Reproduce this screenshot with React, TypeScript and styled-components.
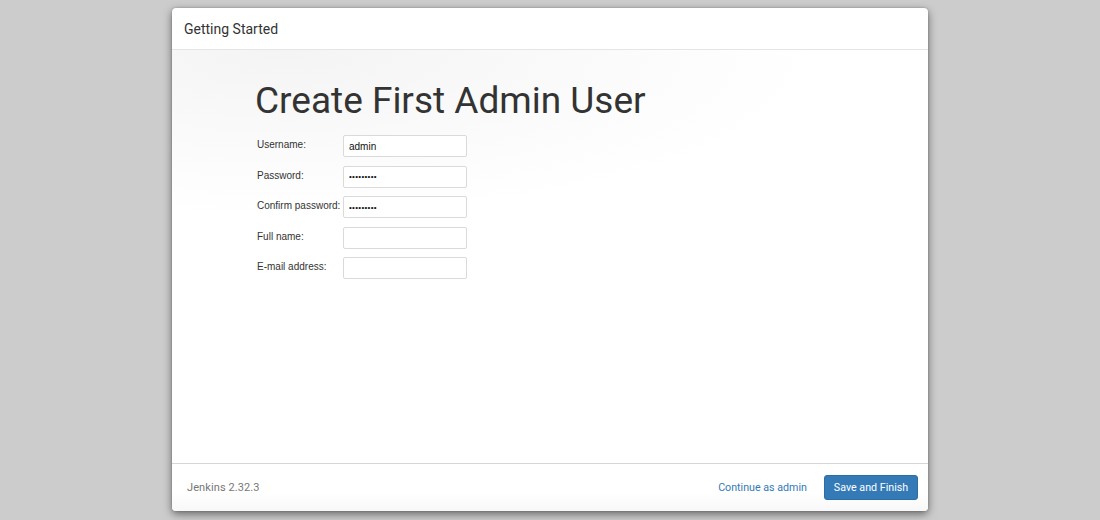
import styled, { createGlobalStyle } from "styled-components";

const GlobalStyle = createGlobalStyle`
  html, body {
    margin: 0;
    padding: 0;
    background: #cccccc;
  }
  body {
    font-family: Roboto, "Liberation Sans", Arial, sans-serif;
    color: #333;
  }
`;

const fields = [
  { label: "Username:", type: "text", value: "admin" },
  { label: "Password:", type: "password", value: "admin1234" },
  { label: "Confirm password:", type: "password", value: "admin1234" },
  { label: "Full name:", type: "text", value: "" },
  { label: "E-mail address:", type: "text", value: "" },
];

const App = () => {
  return (
    <>
      <GlobalStyle />
      <Backdrop>
        <Dialog>
          <DialogHeader>
            <DialogTitle>Getting Started</DialogTitle>
          </DialogHeader>
          <DialogBody>
            <PageTitle>Create First Admin User</PageTitle>
            <FormGrid>
              {fields.map((f) => (
                <FieldRow key={f.label}>
                  <FieldLabel>{f.label}</FieldLabel>
                  <TextInput
                    type={f.type}
                    defaultValue={f.value}
                    $masked={f.type === "password"}
                  />
                </FieldRow>
              ))}
            </FormGrid>
          </DialogBody>
          <DialogFooter>
            <Version>Jenkins 2.32.3</Version>
            <FooterActions>
              <LinkButton href="#">Continue as admin</LinkButton>
              <PrimaryButton>Save and Finish</PrimaryButton>
            </FooterActions>
          </DialogFooter>
        </Dialog>
      </Backdrop>
    </>
  );
};

export default App;

const Backdrop = styled.div`
  width: 1100px;
  height: 520px;
  display: flex;
  justify-content: center;
  padding-top: 8px;
  box-sizing: border-box;
  overflow: hidden;
`;

const Dialog = styled.div`
  width: 756px;
  height: 503px;
  background: #fff;
  border-radius: 4px;
  box-shadow: 0 3px 9px rgba(0, 0, 0, 0.5), 0 0 2px rgba(0, 0, 0, 0.25);
  display: flex;
  flex-direction: column;
  overflow: hidden;
`;

const DialogHeader = styled.div`
  height: 41px;
  border-bottom: 1px solid #e5e5e5;
  display: flex;
  align-items: center;
  padding: 0 12px;
  flex-shrink: 0;
`;

const DialogTitle = styled.h4`
  margin: 0;
  font-family: Roboto, sans-serif;
  font-size: 14px;
  font-weight: 400;
  color: #333;
`;

const DialogBody = styled.div`
  flex: 1;
  padding: 28px 0 0 83px;
  background: radial-gradient(
    ellipse 70% 40% at 15% 0%,
    #f4f4f4 0%,
    #f9f9f9 45%,
    #ffffff 100%
  );
`;

const PageTitle = styled.h1`
  margin: 0 0 11px 0;
  font-family: Roboto, sans-serif;
  font-size: 37px;
  font-weight: 400;
  color: #333;
  line-height: 46px;
`;

const FormGrid = styled.div`
  display: flex;
  flex-direction: column;
  gap: 8.6px;
  margin-left: 2px;
`;

const FieldRow = styled.div`
  display: grid;
  grid-template-columns: 86px 124px;
  align-items: start;
`;

const FieldLabel = styled.label`
  font-family: "Liberation Sans", Arial, sans-serif;
  font-size: 10px;
  color: #333;
  padding-top: 4px;
  white-space: nowrap;
`;

const TextInput = styled.input<{ $masked?: boolean }>`
  width: 124px;
  height: 22px;
  box-sizing: border-box;
  border: 1px solid #dadada;
  border-radius: 2px;
  padding: 0 5px;
  font-family: "Liberation Sans", Arial, sans-serif;
  font-size: ${(p) => (p.$masked ? "8px" : "10px")};
  letter-spacing: ${(p) => (p.$masked ? "0.3px" : "0")};
  color: #111;
  background: #fff;
  outline: none;
`;

const DialogFooter = styled.div`
  height: 47px;
  flex-shrink: 0;
  border-top: 1px solid #d6d6d6;
  display: flex;
  align-items: center;
  justify-content: space-between;
  padding: 0 10px 0 15px;
  background: linear-gradient(to bottom, #ffffff 60%, #f8f8f8 100%);
`;

const Version = styled.span`
  font-family: Roboto, sans-serif;
  font-size: 11px;
  font-weight: 400;
  letter-spacing: 0.1px;
  color: #777;
`;

const FooterActions = styled.div`
  display: flex;
  align-items: center;
  gap: 17px;
`;

const LinkButton = styled.a`
  font-family: Roboto, sans-serif;
  font-size: 10.7px;
  color: #337ab7;
  text-decoration: none;
`;

const PrimaryButton = styled.button`
  height: 25px;
  width: 94px;
  background: #337ab7;
  border: 1px solid #2e6da4;
  border-radius: 3px;
  color: #fff;
  font-family: Roboto, sans-serif;
  font-size: 10.7px;
  padding: 0;
  cursor: pointer;
`;
